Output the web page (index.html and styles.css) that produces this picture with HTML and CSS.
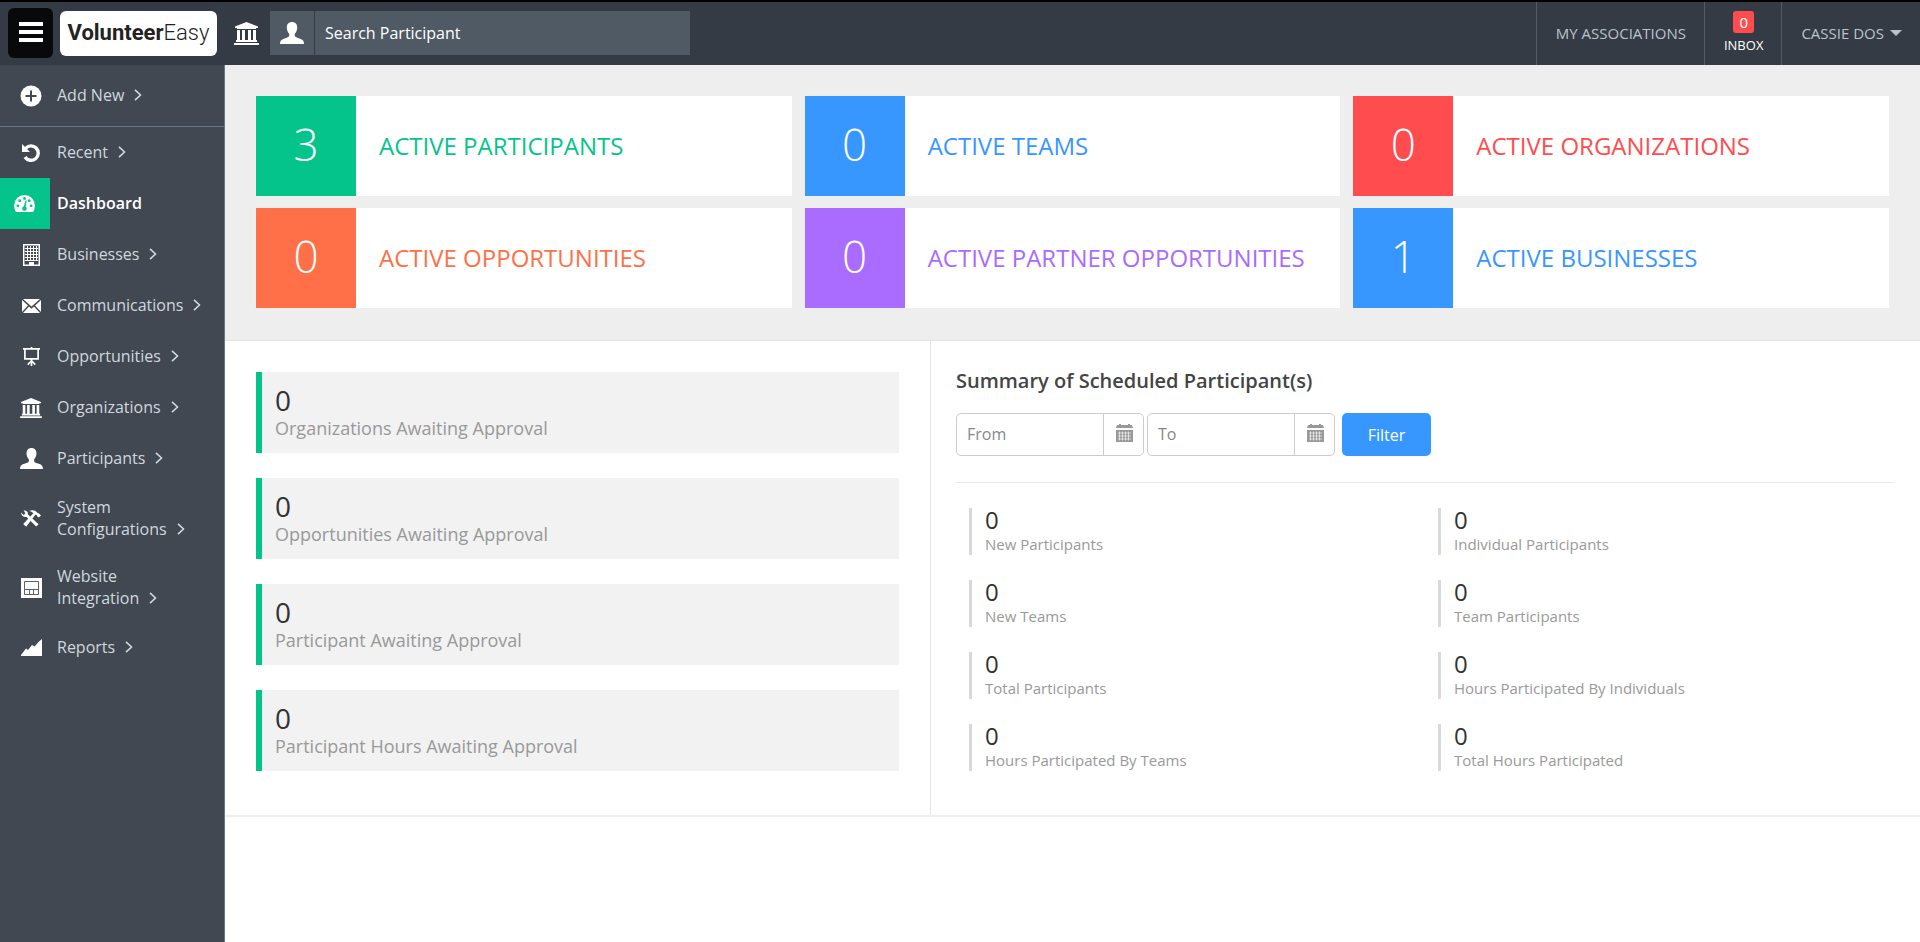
FILE: index.html
```html
<!DOCTYPE html>
<html lang="en">
<head>
<meta charset="utf-8">
<title>VolunteerEasy Dashboard</title>
<link rel="stylesheet" href="styles.css">
</head>
<body>
<svg class="sprite" aria-hidden="true">
  <symbol id="bank" viewBox="0 0 25 23"><path fill="currentColor" d="M12.500 0 24 4.500V6H22V7H3V6H1V4.500zM3 8h3v10h2V8h3v10h3V8h3v10h2V8h3v10h1v2H2v-2h1zM0 21h25v2H0z"/></symbol>
  <symbol id="user" viewBox="0 0 24 22"><path fill="currentColor" d="M12 0c3.400 0 5.200 2.300 5.200 5.500 0 3-1.200 4.900-2.400 6.300-.5 2.600.4 3.400 3.200 4.300 4 1.200 6 2.200 6 5.900H0c0-3.700 2-4.700 6-5.900 2.800-.9 3.700-1.700 3.200-4.300C8 10.400 6.800 8.500 6.800 5.500 6.800 2.300 8.600 0 12 0z"/></symbol>
  <symbol id="plus" viewBox="0 0 22 22"><circle cx="11" cy="11" r="10.500" fill="currentColor"/><path d="M11 5.500v11M5.500 11h11" stroke="#414852" stroke-width="2"/></symbol>
  <symbol id="undo" viewBox="0 0 20 20"><path d="M4.500 5.500A7.200 7.200 0 1 1 4 14" fill="none" stroke="currentColor" stroke-width="3.400"/><path fill="currentColor" d="M1 1v8h8z"/></symbol>
  <symbol id="gauge" viewBox="0 0 22 18"><path fill="currentColor" d="M11 0a11 11 0 0 1 11 11c0 2.600-.8 5-2 7H2c-1.200-2-2-4.400-2-7A11 11 0 0 1 11 0z"/><g fill="#04c48c"><circle cx="4" cy="11.500" r="1.500"/><circle cx="6" cy="6" r="1.500"/><circle cx="11" cy="3.700" r="1.500"/><circle cx="16" cy="6" r="1.500"/><circle cx="18" cy="11.500" r="1.500"/><path d="M12.200 5.500 10.300 12a2.400 2.400 0 1 0 2 .3l1-6.500z"/></g></symbol>
  <symbol id="building" viewBox="0 0 17 22"><path fill="currentColor" fill-rule="evenodd" d="M0 0h17v22H0zM1.500 1.500v19H6V18h5v2.500h4.500v-19z"/><path fill="currentColor" d="M6 18h5v3H6z"/><path stroke="currentColor" stroke-width="1" d="M4.500 2v15M7.500 2v15M10.500 2v15M13.500 2v15M2 4.500h13M2 7.500h13M2 10.500h13M2 13.500h13M2 16.500h13"/></symbol>
  <symbol id="mail" viewBox="0 0 19 14"><path fill="currentColor" d="M1 0h17L9.500 7.500zM0 1l6 5.500L0 13zM19 1l-6 5.500 6 6.500zM7 7.500l2.500 2.200L12 7.500l6 6.500H1z"/></symbol>
  <symbol id="board" viewBox="0 0 18 20"><path d="M0 2h18M2 2v10.500h14V2M9 12v8M9 14.500 5 18.500M9 14.500l4 4M9 0v2" fill="none" stroke="currentColor" stroke-width="1.800"/></symbol>
  <symbol id="tools" viewBox="0 0 20 17"><path fill="currentColor" d="M0 2.500 2.600 5 4.400 3.600 2.600.6C5 0 7.200 1.600 7 4.500L17.600 14.200 15.200 16.600 5.600 7C3 7.500.2 5.800 0 2.500z"/><path fill="currentColor" d="M8 1C11.500-.6 15 .3 16.800 3.200L17.800 3.200 20 5.400 17.800 7.600 15.800 6V4.900L14.300 4.700 5.200 16.800 2.200 14 12.400 3.300C11.300 1.900 9.800 1.500 8 1z"/></symbol>
  <symbol id="window" viewBox="0 0 21 20"><path fill="currentColor" d="M0 0h21v20H0z"/><path d="M3.500 3.500h14v13h-14zM4 11.500h13M8.500 12v4M12.500 12v4" fill="none" stroke="#5b6069"/></symbol>
  <symbol id="chart" viewBox="0 0 21 17"><path fill="currentColor" d="M0 17v-1l5-6.500 2 1.500 4-5 2.500 1.500L18 2.500 21 0v17z"/></symbol>
  <symbol id="calendar" viewBox="0 0 17 18"><path fill="currentColor" d="M3 0h2v1h7V0h2v1h2l1 3H0l1-3h2z"/><path fill="currentColor" d="M0 6h17v12H0z"/><path d="M2 9h13M2 12h13M2 15h13M3.500 7.500v9M6.500 7.500v9M9.500 7.500v9M12.500 7.500v9" stroke="#fff" stroke-width=".6"/></symbol>
  <symbol id="chevron" viewBox="0 0 8 12"><path d="m1 .8 5.500 5.200L1 11.200" fill="none" stroke="currentColor" stroke-width="1.600"/></symbol>
</svg>

<header class="topbar">
  <button class="menu-button" aria-label="Toggle menu"><span></span><span></span><span></span></button>
  <a class="brand" href="#"><b>Volunteer</b>Easy</a>
  <a class="bank-link" href="#" aria-label="Organizations"><svg width="25" height="23"><use href="#bank"/></svg></a>
  <form class="search">
    <label class="search-icon" for="search" aria-label="Search Participant"><svg width="24" height="22"><use href="#user"/></svg></label>
    <input id="search" type="text" placeholder="Search Participant">
  </form>
  <nav class="top-links">
    <a class="top-link" href="#">MY ASSOCIATIONS</a>
    <a class="top-link inbox" href="#"><span class="badge">0</span>INBOX</a>
    <button class="top-link account">CASSIE DOS<i class="caret"></i></button>
  </nav>
</header>

<div class="shell">
  <nav class="sidebar">
    <a class="nav-item add-new" href="#"><span class="nav-icon"><svg width="22" height="22"><use href="#plus"/></svg></span><span>Add New<svg class="chev"><use href="#chevron"/></svg></span></a>
    <a class="nav-item" href="#"><span class="nav-icon"><svg width="20" height="20"><use href="#undo"/></svg></span><span>Recent<svg class="chev"><use href="#chevron"/></svg></span></a>
    <a class="nav-item active" href="#"><span class="nav-icon"><svg width="21" height="17"><use href="#gauge"/></svg></span><span>Dashboard</span></a>
    <a class="nav-item" href="#"><span class="nav-icon"><svg width="17" height="22"><use href="#building"/></svg></span><span>Businesses<svg class="chev"><use href="#chevron"/></svg></span></a>
    <a class="nav-item" href="#"><span class="nav-icon"><svg width="19" height="14"><use href="#mail"/></svg></span><span>Communications<svg class="chev"><use href="#chevron"/></svg></span></a>
    <a class="nav-item" href="#"><span class="nav-icon"><svg width="17" height="19"><use href="#board"/></svg></span><span>Opportunities<svg class="chev"><use href="#chevron"/></svg></span></a>
    <a class="nav-item" href="#"><span class="nav-icon"><svg width="22" height="20"><use href="#bank"/></svg></span><span>Organizations<svg class="chev"><use href="#chevron"/></svg></span></a>
    <a class="nav-item" href="#"><span class="nav-icon"><svg width="23" height="21"><use href="#user"/></svg></span><span>Participants<svg class="chev"><use href="#chevron"/></svg></span></a>
    <a class="nav-item" href="#"><span class="nav-icon"><svg width="20" height="17"><use href="#tools"/></svg></span><span>System<br>Configurations<svg class="chev"><use href="#chevron"/></svg></span></a>
    <a class="nav-item" href="#"><span class="nav-icon"><svg width="21" height="20"><use href="#window"/></svg></span><span>Website<br>Integration<svg class="chev"><use href="#chevron"/></svg></span></a>
    <a class="nav-item" href="#"><span class="nav-icon"><svg width="21" height="17"><use href="#chart"/></svg></span><span>Reports<svg class="chev"><use href="#chevron"/></svg></span></a>
  </nav>

  <main class="content">
    <section class="cards">
      <a class="card green" href="#"><span class="count">3</span><span class="title">ACTIVE PARTICIPANTS</span></a>
      <a class="card blue" href="#"><span class="count">0</span><span class="title">ACTIVE TEAMS</span></a>
      <a class="card red" href="#"><span class="count">0</span><span class="title">ACTIVE ORGANIZATIONS</span></a>
      <a class="card orange" href="#"><span class="count">0</span><span class="title">ACTIVE OPPORTUNITIES</span></a>
      <a class="card purple" href="#"><span class="count">0</span><span class="title">ACTIVE PARTNER OPPORTUNITIES</span></a>
      <a class="card blue" href="#"><span class="count">1</span><span class="title">ACTIVE BUSINESSES</span></a>
    </section>

    <div class="panels">
      <section class="approvals">
        <a class="approval" href="#"><b>0</b><span>Organizations Awaiting Approval</span></a>
        <a class="approval" href="#"><b>0</b><span>Opportunities Awaiting Approval</span></a>
        <a class="approval" href="#"><b>0</b><span>Participant Awaiting Approval</span></a>
        <a class="approval" href="#"><b>0</b><span>Participant Hours Awaiting Approval</span></a>
      </section>

      <section class="summary">
        <h2>Summary of Scheduled Participant(s)</h2>
        <form class="filters">
          <div class="date-field"><input type="text" placeholder="From" aria-label="From"><button type="button" aria-label="Pick from date"><svg width="17" height="18"><use href="#calendar"/></svg></button></div>
          <div class="date-field"><input type="text" placeholder="To" aria-label="To"><button type="button" aria-label="Pick to date"><svg width="17" height="18"><use href="#calendar"/></svg></button></div>
          <button class="filter-button" type="button">Filter</button>
        </form>
        <div class="stats">
          <div class="stat"><b>0</b><span>New Participants</span></div>
          <div class="stat"><b>0</b><span>Individual Participants</span></div>
          <div class="stat"><b>0</b><span>New Teams</span></div>
          <div class="stat"><b>0</b><span>Team Participants</span></div>
          <div class="stat"><b>0</b><span>Total Participants</span></div>
          <div class="stat"><b>0</b><span>Hours Participated By Individuals</span></div>
          <div class="stat"><b>0</b><span>Hours Participated By Teams</span></div>
          <div class="stat"><b>0</b><span>Total Hours Participated</span></div>
        </div>
      </section>
    </div>
  </main>
</div>
</body>
</html>
```
FILE: styles.css
```css
* { box-sizing: border-box; }

body {
  margin: 0;
  min-height: 100vh;
  display: flex;
  flex-direction: column;
  font: 16px/22px "Open Sans", "Noto Sans", sans-serif;
  color: #333;
  background: #fff;
}

a { color: inherit; text-decoration: none; }
button, input { font: inherit; border: 0; margin: 0; border-radius: 0; }
.sprite { position: absolute; width: 0; height: 0; }
svg { display: block; }

/* Top bar */
.topbar {
  display: flex;
  align-items: center;
  height: 65px;
  padding: 0 0 1px 8px;
  border-top: 2px solid #000;
  background: #353b45;
  color: #fff;
}
.menu-button {
  display: flex;
  flex-direction: column;
  align-items: center;
  justify-content: center;
  gap: 4px;
  width: 45px;
  height: 50px;
  padding: 0 0 2px;
  border-radius: 6px;
  background: #07090b;
}
.menu-button span { width: 24px; height: 4px; background: #fff; }
.brand {
  display: flex;
  align-items: center;
  justify-content: center;
  width: 157px;
  height: 45px;
  margin-left: 7px;
  border-radius: 6px;
  background: #fff;
  color: #222;
  font: 300 22px/44px Roboto, "Open Sans", sans-serif;
}
.brand b { font-weight: 700; }
.bank-link { margin: 0 11px 0 17px; }
.search { display: flex; gap: 1px; width: 420px; height: 44px; }
.search-icon {
  display: flex;
  align-items: center;
  justify-content: center;
  width: 44px;
  background: #4f5a65;
}
.search input {
  flex: 1;
  min-width: 0;
  padding: 0 10px;
  background: #4f5a65;
  color: #fff;
}
.search input::placeholder { color: #fff; opacity: 1; }
.top-links { display: flex; align-self: stretch; margin: 0 0 -1px auto; font-size: 15px; }
.top-link {
  display: flex;
  align-items: center;
  padding: 0 18px 2px 19px;
  border-left: 1px solid #535b69;
  background: none;
  color: #b9c3cc;
}
.inbox {
  flex-direction: column;
  justify-content: center;
  gap: 1px;
  padding-bottom: 0;
  color: #fff;
  font-size: 13px;
}
.badge {
  width: 21px;
  border-radius: 3px;
  background: #ff4d4f;
  font-size: 15px;
  text-align: center;
}
.caret {
  margin-left: 6px;
  border: 6px solid transparent;
  border-top-color: #b9c3cc;
  border-bottom: 0;
}

/* Sidebar */
.shell { display: flex; flex: 1; }
.sidebar {
  flex: none;
  width: 225px;
  border-right: 1px solid #67768a;
  background: #414852;
  color: #cfd8dd;
}
.nav-item {
  display: flex;
  align-items: center;
  gap: 7px;
  min-height: 51px;
}
.nav-item > span:last-child { padding: 12px 0 13px; }
.add-new { min-height: 62px; border-bottom: 1px solid #67768a; }
.nav-icon {
  display: flex;
  align-items: center;
  align-self: stretch;
  justify-content: center;
  width: 50px;
  padding-left: 12px;
  color: #fff;
}
.active { color: #fff; font-weight: 600; }
.active .nav-icon { padding: 0 2px 0 0; background: #04c48c; }
.chev { display: inline-block; width: 8px; height: 12px; margin-left: 10px; }

/* Count cards */
.content { flex: 1; min-width: 0; }
.cards {
  display: grid;
  grid-template-columns: repeat(3, 1fr);
  gap: 12px 13px;
  padding: 31px 31px 32px;
  border-bottom: 1px solid #e4e4e4;
  background: #eee;
}
.card { display: flex; height: 100px; background: #fff; color: var(--tone); }
.count {
  width: 100px;
  background: var(--tone);
  color: #fff;
  font-size: 44px;
  font-weight: 300;
  line-height: 96px;
  text-align: center;
}
.title { padding-left: 23px; font-size: 24px; font-weight: 500; line-height: 100px; white-space: nowrap; }
.green { --tone: #04c48c; }
.blue { --tone: #3797ff; }
.red { --tone: #ff4d4f; }
.orange { --tone: #ff7048; }
.purple { --tone: #aa6bff; }

/* Lower panels */
.panels { display: flex; border-bottom: 2px solid #eee; }
.approvals {
  display: flex;
  flex-direction: column;
  gap: 25px;
  width: 706px;
  padding: 31px 31px 44px;
  border-right: 1px solid #e4e4e4;
}
.approval {
  display: flex;
  flex-direction: column;
  height: 81px;
  padding: 13px;
  border-left: 6px solid #04c48c;
  background: #f2f2f2;
}
.approval b { font-size: 28px; font-weight: 400; line-height: 31px; }
.approval span { color: #999; font-size: 18px; line-height: 24px; }
.summary { flex: 1; min-width: 0; padding: 25px 26px 0 25px; }
.summary h2 {
  margin: 0 0 17px;
  color: #444;
  font-size: 20px;
  font-weight: 600;
  line-height: 30px;
}
.filters { display: flex; gap: 3px; padding-bottom: 26px; border-bottom: 1px solid #e8e8e8; }
.date-field {
  display: flex;
  width: 188px;
  height: 43px;
  border: 1px solid #ccc;
  border-radius: 5px;
}
.date-field input { flex: 1; min-width: 0; padding: 0 10px 2px; background: none; }
.date-field input::placeholder { color: #888; opacity: 1; }
.date-field button {
  display: flex;
  align-items: center;
  justify-content: center;
  width: 40px;
  padding: 0 0 4px 2px;
  border-left: 1px solid #ccc;
  background: none;
  color: #999;
}
.filter-button {
  width: 89px;
  margin-left: 4px;
  border-radius: 5px;
  background: #3797ff;
  color: #fff;
}
.stats { display: grid; grid-template-columns: 1fr 1fr; gap: 25px 0; padding: 25px 0 0; }
.stat {
  display: flex;
  flex-direction: column;
  height: 47px;
  margin-left: 13px;
  padding-left: 13px;
  border-left: 3px solid #d9d9d9;
}
.stat b { font-size: 24px; font-weight: 400; line-height: 24px; }
.stat span { color: #999; font-size: 15px; line-height: 24px; }
```
